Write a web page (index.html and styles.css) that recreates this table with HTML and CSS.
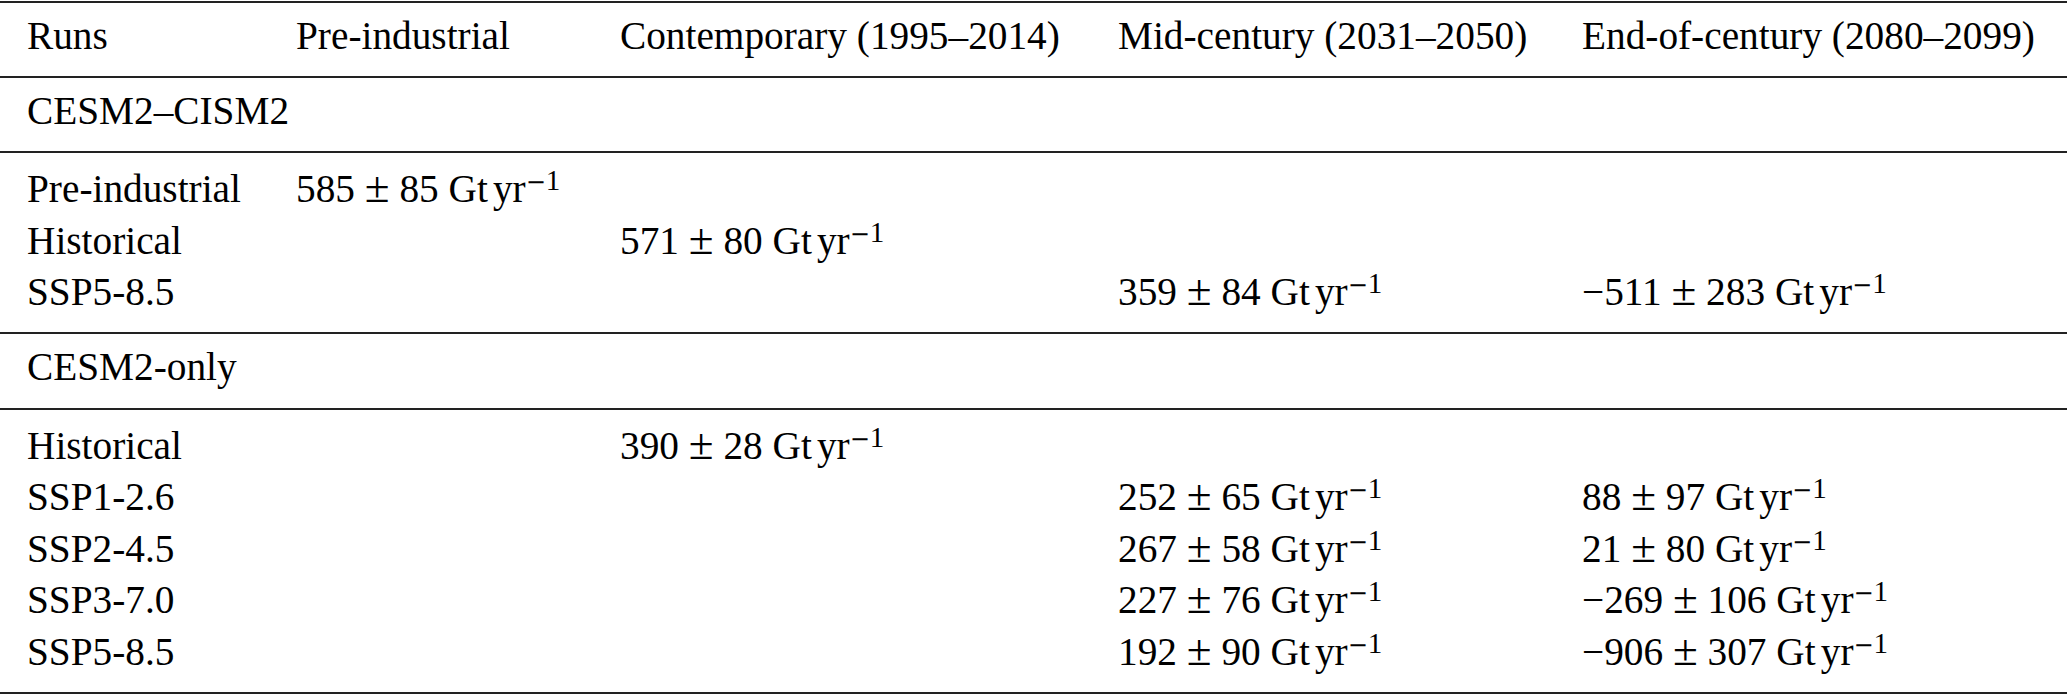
FILE: index.html
```html
<!DOCTYPE html>
<html lang="en">
<head>
    <meta charset="UTF-8">
    <title>Ice sheet surface mass balance</title>
    <link rel="stylesheet" href="styles.css">
</head>
<body>
    <table class="smb-table">
        <colgroup>
            <col class="col-runs">
            <col class="col-pi">
            <col class="col-contemp">
            <col class="col-mid">
            <col class="col-end">
        </colgroup>
        <thead>
            <tr>
                <th>Runs</th>
                <th>Pre-industrial</th>
                <th>Contemporary (1995–2014)</th>
                <th>Mid-century (2031–2050)</th>
                <th>End-of-century (2080–2099)</th>
            </tr>
        </thead>
        <tbody>
            <tr class="section">
                <td colspan="5">CESM2–CISM2</td>
            </tr>
            <tr class="first">
                <td>Pre-industrial</td>
                <td>585 <span class="pm">±</span> 85 <span class="unit">Gt yr</span><sup><span class="neg">−</span>1</sup></td>
                <td></td>
                <td></td>
                <td></td>
            </tr>
            <tr>
                <td>Historical</td>
                <td></td>
                <td>571 <span class="pm">±</span> 80 <span class="unit">Gt yr</span><sup><span class="neg">−</span>1</sup></td>
                <td></td>
                <td></td>
            </tr>
            <tr class="last">
                <td>SSP5-8.5</td>
                <td></td>
                <td></td>
                <td>359 <span class="pm">±</span> 84 <span class="unit">Gt yr</span><sup><span class="neg">−</span>1</sup></td>
                <td>−511 <span class="pm">±</span> 283 <span class="unit">Gt yr</span><sup><span class="neg">−</span>1</sup></td>
            </tr>
            <tr class="section">
                <td colspan="5">CESM2-only</td>
            </tr>
            <tr class="first">
                <td>Historical</td>
                <td></td>
                <td>390 <span class="pm">±</span> 28 <span class="unit">Gt yr</span><sup><span class="neg">−</span>1</sup></td>
                <td></td>
                <td></td>
            </tr>
            <tr>
                <td>SSP1-2.6</td>
                <td></td>
                <td></td>
                <td>252 <span class="pm">±</span> 65 <span class="unit">Gt yr</span><sup><span class="neg">−</span>1</sup></td>
                <td>88 <span class="pm">±</span> 97 <span class="unit">Gt yr</span><sup><span class="neg">−</span>1</sup></td>
            </tr>
            <tr>
                <td>SSP2-4.5</td>
                <td></td>
                <td></td>
                <td>267 <span class="pm">±</span> 58 <span class="unit">Gt yr</span><sup><span class="neg">−</span>1</sup></td>
                <td>21 <span class="pm">±</span> 80 <span class="unit">Gt yr</span><sup><span class="neg">−</span>1</sup></td>
            </tr>
            <tr>
                <td>SSP3-7.0</td>
                <td></td>
                <td></td>
                <td>227 <span class="pm">±</span> 76 <span class="unit">Gt yr</span><sup><span class="neg">−</span>1</sup></td>
                <td>−269 <span class="pm">±</span> 106 <span class="unit">Gt yr</span><sup><span class="neg">−</span>1</sup></td>
            </tr>
            <tr class="last">
                <td>SSP5-8.5</td>
                <td></td>
                <td></td>
                <td>192 <span class="pm">±</span> 90 <span class="unit">Gt yr</span><sup><span class="neg">−</span>1</sup></td>
                <td>−906 <span class="pm">±</span> 307 <span class="unit">Gt yr</span><sup><span class="neg">−</span>1</sup></td>
            </tr>
        </tbody>
    </table>
</body>
</html>
```
FILE: styles.css
```css
body {
    margin: 0;
    padding-top: 1px;
    background: #fff;
    color: #000;
    font-family: "Liberation Serif", "Times New Roman", serif;
    font-size: 39.3px;
}
.smb-table {
    width: 100%;
    border-collapse: separate;
    border-spacing: 0;
    table-layout: fixed;
}
.col-runs {
    width: 269px;
}
.col-pi {
    width: 324px;
}
.col-contemp {
    width: 498px;
}
.col-mid {
    width: 464px;
}
th,
td {
    padding: 0 0 0 27px;
    text-align: left;
    font-weight: normal;
    line-height: 51.6px;
    white-space: nowrap;
    vertical-align: baseline;
}
th {
    padding-top: 8px;
    padding-bottom: 13px;
    border-top: 2px solid #222;
    border-bottom: 2px solid #222;
}
.section td {
    padding-top: 8px;
    padding-bottom: 14px;
    border-bottom: 2px solid #222;
}
.first td {
    padding-top: 11px;
}
.last td {
    padding-bottom: 13px;
    border-bottom: 2px solid #222;
}
.pm {
    font-size: 1.15em;
    line-height: 0;
}
.unit {
    word-spacing: -0.12em;
}
sup {
    font-size: 29px;
    line-height: 0;
    vertical-align: 12px;
}
.neg {
    font-family: "DejaVu Serif", "Liberation Serif", serif;
    font-size: 24px;
}
```
